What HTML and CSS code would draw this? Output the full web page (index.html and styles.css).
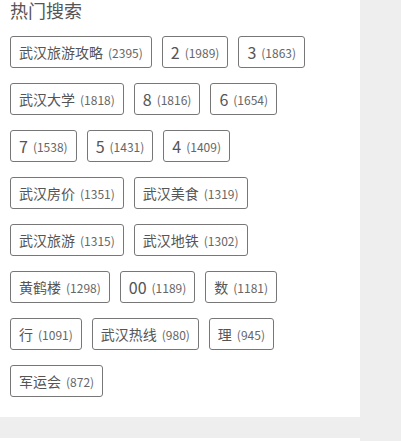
FILE: index.html
```html
<!DOCTYPE html>
<html lang="zh-CN">
<head>
<meta charset="utf-8">
<title>热门搜索</title>
<link rel="stylesheet" href="styles.css">
</head>
<body>
<div class="panel">
  <h3 class="title">热门搜索</h3>
  <div class="tags">
    <a class="tag"><span class="name">武汉旅游攻略</span><span class="count">(2395)</span></a>
    <a class="tag"><span class="name num">2</span><span class="count">(1989)</span></a>
    <a class="tag"><span class="name num">3</span><span class="count">(1863)</span></a>
    <a class="tag"><span class="name">武汉大学</span><span class="count">(1818)</span></a>
    <a class="tag"><span class="name num">8</span><span class="count">(1816)</span></a>
    <a class="tag"><span class="name num">6</span><span class="count">(1654)</span></a>
    <a class="tag"><span class="name num">7</span><span class="count">(1538)</span></a>
    <a class="tag"><span class="name num">5</span><span class="count">(1431)</span></a>
    <a class="tag"><span class="name num">4</span><span class="count">(1409)</span></a>
    <a class="tag"><span class="name">武汉房价</span><span class="count">(1351)</span></a>
    <a class="tag"><span class="name">武汉美食</span><span class="count">(1319)</span></a>
    <a class="tag"><span class="name">武汉旅游</span><span class="count">(1315)</span></a>
    <a class="tag"><span class="name">武汉地铁</span><span class="count">(1302)</span></a>
    <a class="tag"><span class="name">黄鹤楼</span><span class="count">(1298)</span></a>
    <a class="tag"><span class="name num">00</span><span class="count">(1189)</span></a>
    <a class="tag"><span class="name">数</span><span class="count">(1181)</span></a>
    <a class="tag"><span class="name">行</span><span class="count">(1091)</span></a>
    <a class="tag"><span class="name">武汉热线</span><span class="count">(980)</span></a>
    <a class="tag"><span class="name">理</span><span class="count">(945)</span></a>
    <a class="tag"><span class="name">军运会</span><span class="count">(872)</span></a>
  </div>
</div>
<div class="panel next"></div>
</body>
</html>
```
FILE: styles.css
```css
html, body {
  margin: 0;
  padding: 0;
  background: #eeeeee;
}
body {
  font-family: "Noto Sans CJK SC", "Open Sans", sans-serif;
  color: #555555;
}
.panel {
  width: 360px;
  box-sizing: border-box;
  background: #ffffff;
  padding: 0 10px 20px 10px;
}
.panel.next {
  margin-top: 21px;
  height: 20px;
}
.title {
  margin: 0;
  font-size: 18px;
  line-height: 21px;
  font-weight: normal;
  color: #555555;
}
.tags {
  margin-top: 15px;
  display: flex;
  flex-wrap: wrap;
  column-gap: 10px;
  row-gap: 15px;
}
.tag {
  display: flex;
  align-items: center;
  height: 32px;
  box-sizing: border-box;
  padding: 0 8px;
  border: 1px solid #777777;
  border-radius: 3px;
  color: #555555;
  text-decoration: none;
}
.name {
  font-size: 14px;
}
.name.num {
  font-size: 16px;
}
.count {
  font-size: 12px;
  margin-left: 5px;
  color: #666666;
}
```
